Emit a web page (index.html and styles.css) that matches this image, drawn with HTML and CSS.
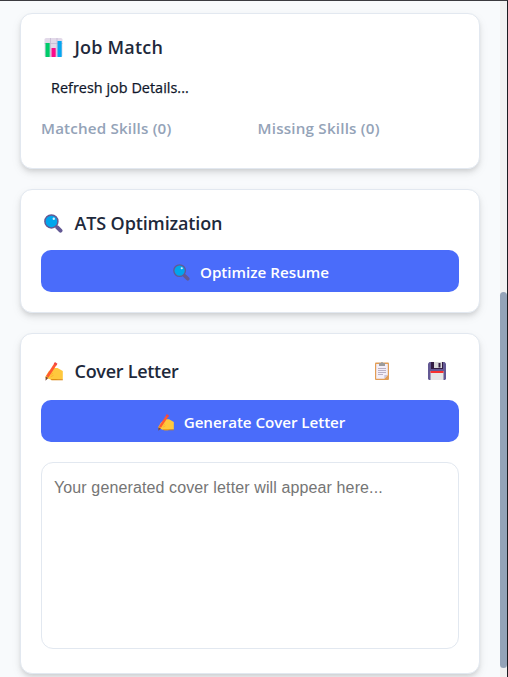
FILE: index.html
```html
<!DOCTYPE html>
<html lang="en">
<head>
<meta charset="utf-8">
<title>Job Match</title>
<link rel="stylesheet" href="styles.css">
</head>
<body>
<svg class="sprite" aria-hidden="true">
  <symbol id="chart" viewBox="0 0 18 19">
    <rect width="18" height="19" rx="1.6" fill="#e2d9e9"/>
    <path d="M0 5.5h18M6 0v19M12.5 0v19" stroke="#c5b9d2" stroke-width=".8"/>
    <rect x="1" y="5" width="4.2" height="14" rx=".5" fill="#00cc6a"/>
    <rect x="7" y="10" width="4.2" height="9" rx=".5" fill="#fb0a8a"/>
    <rect x="13" y="3" width="4.2" height="16" rx=".5" fill="#05a6f0"/>
  </symbol>
  <symbol id="search" viewBox="0 0 19 19">
    <path d="M11.5 11.5l2 2" stroke="#635994" stroke-width="2"/>
    <path d="M13.3 13.4l3.2 3.2" stroke="#635994" stroke-width="4" stroke-linecap="round"/>
    <circle cx="7.4" cy="7.4" r="6.5" fill="#00a6ed" stroke="#635994" stroke-width="1.5"/>
    <circle cx="9.8" cy="4.8" r="1.2" fill="#d3f1ff"/>
  </symbol>
  <symbol id="write" viewBox="0 0 19 19">
    <path d="M1 15.500L4.500 9.500l5-3.500h4l5.300 3v8.300L14 17.500l-2 .6H8.500l-2-.6z" fill="#ffc83d"/>
    <path d="M6.500 17.300h12.300v1H7.500z" fill="#d67d00"/>
    <path d="M1.700 14.500l2.600 1.600-2.800 2.700z" fill="#7d4533"/>
    <path d="M3.300 14.700L11.700 1.800" stroke="#ff5930" stroke-width="2.800"/>
    <path d="M11 2.800l1.200-1.900" stroke="#f04745" stroke-width="3"/>
    <path d="M6.500 12.800l2.500-1.600M6.500 14.800l3-1.500" stroke="#ffb02e" stroke-width="1"/>
  </symbol>
  <symbol id="clipboard" viewBox="0 0 14 18">
    <rect width="14" height="17.500" y=".5" rx="1" fill="#e39d54"/>
    <path d="M1.200 2h11.600v11L9.300 16.700H1.200z" fill="#f3eef8"/>
    <path d="M9.300 16.700V13h3.500z" fill="#cdc4d6"/>
    <path d="M4 1h2a1 1 0 0 1 2 0h2v3H4z" fill="#9b9b9b"/>
    <path d="M3 6.500h8M3 8.500h8M3 10.500h8M3 12.500h5" stroke="#b3a9bd" stroke-width=".9"/>
  </symbol>
  <symbol id="disk" viewBox="0 0 18 18">
    <path d="M1.500 0h15L18 1.500V17l-1 1H1l-1-1V1.500z" fill="#635994"/>
    <path d="M3 0h12v7H3z" fill="#321b41"/>
    <path d="M6 0h8v6H6z" fill="#d8d8d8"/>
    <path d="M10.500 1h2v4.500h-2z" fill="#321b41"/>
    <path d="M2.500 9h13v9h-13z" fill="#e6e6e6"/>
    <path d="M2.500 9h13v2h-13z" fill="#f8312f"/>
  </symbol>
</svg>
<div class="window">
  <main class="page">
    <section class="card match">
      <h2 class="title"><svg class="icon"><use href="#chart"/></svg><span class="t-job">Job Match</span></h2>
      <p class="status">Refresh job Details...</p>
      <div class="skills"><h3 class="t-matched">Matched Skills (0)</h3><h3 class="t-missing">Missing Skills (0)</h3></div>
    </section>
    <section class="card ats">
      <h2 class="title"><svg class="icon"><use href="#search"/></svg><span class="t-ats">ATS Optimization</span></h2>
      <button class="primary"><svg class="small"><use href="#search"/></svg><span class="t-optimize">Optimize Resume</span></button>
    </section>
    <section class="card letter">
      <header class="head">
        <h2 class="title"><svg class="icon"><use href="#write"/></svg><span class="t-cover">Cover Letter</span></h2>
        <div class="tools"><svg class="clip"><use href="#clipboard"/></svg><svg class="disk"><use href="#disk"/></svg></div>
      </header>
      <button class="primary"><svg class="small"><use href="#write"/></svg><span class="t-generate">Generate Cover Letter</span></button>
      <textarea class="output" placeholder="Your generated cover letter will appear here..."></textarea>
    </section>
  </main>
  <div class="track"><div class="thumb"></div></div>
</div>
</body>
</html>
```
FILE: styles.css
```css
* { box-sizing: border-box; }
body { margin: 0; overflow: hidden; font-family: "Open Sans", "Noto Sans", sans-serif; color: #1e293b; }
h2, h3, p { margin: 0; }
.sprite { display: none; }
.window { display: flex; height: 677px; border-top: 1px solid #3b3b40; border-right: 1px solid #1b1b20; background: #f8fafc; overflow: hidden; }
.page { width: 500px; padding: 12px 20px 0; display: flex; flex-direction: column; gap: 20px; }
.card { flex: none; padding: 20px; border: 1px solid #e2e8f0; border-radius: 12px; background: #fff; box-shadow: 0 4px 6px -1px rgba(0,0,0,.1), 0 2px 4px -1px rgba(0,0,0,.06), 0 4px 12px rgba(0,0,0,.05); }
.match { height: 156px; }
.ats { height: 124px; }
.letter { height: 341px; }
.title { display: flex; align-items: center; height: 27px; padding-left: 3px; font-size: 18px; line-height: 27px; font-weight: 600; white-space: nowrap; }
.icon { width: 19px; height: 19px; margin-right: 11.5px; }
.t-job { letter-spacing: .2px; }
.t-ats { letter-spacing: -.13px; }
.t-cover { letter-spacing: -.28px; }
.status { margin: 15px 0 0 10px; font-size: 14.4px; line-height: 24px; letter-spacing: .03px; color: #0f172a; -webkit-text-stroke: .25px #0f172a; }
.skills { display: grid; grid-template-columns: 1fr 1fr; column-gap: 15px; margin-top: 16px; }
.skills h3 { font-size: 15.2px; line-height: 24px; font-weight: 600; color: #94a3b8; white-space: nowrap; }
.skills .t-matched { letter-spacing: .16px; }
.skills .t-missing { letter-spacing: .2px; }
.primary { display: flex; align-items: center; justify-content: center; width: 100%; height: 42px; padding: 2px 0 0 2px; border: 0; border-radius: 10px; background: #4a6cfa; color: #fff; font: 600 15.2px/24px "Open Sans", "Noto Sans", sans-serif; white-space: nowrap; }
.small { width: 17px; height: 17px; margin-right: 10px; }
.t-generate { letter-spacing: -.06px; }
.ats .primary { margin-top: 13px; }
.head { display: flex; justify-content: space-between; align-items: center; height: 34px; }
.tools { display: flex; align-items: center; padding-right: 13px; gap: 39px; }
.clip { width: 14px; height: 18px; }
.disk { width: 18px; height: 18px; }
.letter .primary { margin-top: 12px; }
.output { display: block; width: 100%; height: 187px; margin-top: 20px; padding: 12px; border: 1px solid #e2e8f0; border-radius: 12px; background: #fff; resize: none; outline: 0; font: 16px/26px "Liberation Sans", Arial, sans-serif; letter-spacing: .12px; }
.output::placeholder { color: #757575; }
.track { width: 7px; background: #f1f1f1; padding-top: 291px; }
.thumb { height: 376px; border-radius: 4px; background: #94a3b8; }
```
